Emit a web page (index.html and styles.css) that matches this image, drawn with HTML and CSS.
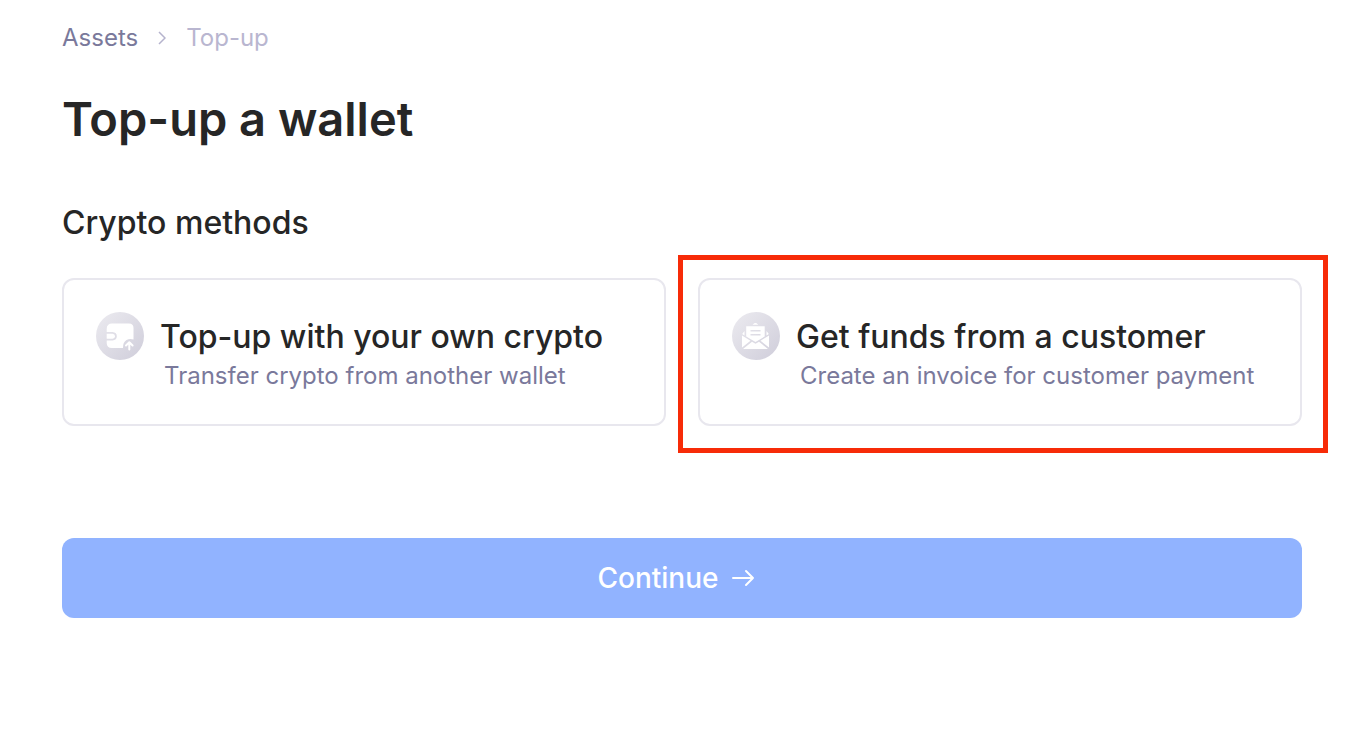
FILE: index.html
```html
<!DOCTYPE html>
<html lang="en">
<head>
<meta charset="utf-8">
<meta name="viewport" content="width=device-width, initial-scale=1">
<title>Top-up a wallet</title>
<link rel="stylesheet" href="styles.css">
</head>
<body>
<main class="page">
  <nav class="breadcrumb" aria-label="Breadcrumb">
    <a class="crumb" href="#">Assets</a>
    <svg class="crumb-arrow" viewBox="0 0 8 14" aria-hidden="true"><path d="M1 1 7 7 1 13"/></svg>
    <span class="crumb-current" aria-current="page">Top-up</span>
  </nav>
  <h1 class="title">Top-up a wallet</h1>
  <h2 class="subtitle">Crypto methods</h2>
  <div class="methods">
    <div class="method-slot">
      <button class="method" type="button">
        <svg class="method-icon" viewBox="0 0 48 48" aria-hidden="true">
          <defs><linearGradient id="disc" x1="0" y1="0" x2="1" y2="1"><stop offset="0" stop-color="#ecebf0"/><stop offset="1" stop-color="#cfcdda"/></linearGradient></defs>
          <circle cx="24" cy="24" r="24" fill="url(#disc)"/>
          <path fill="#fff" d="M16 11.500H33Q37.500 11.500 37.500 16V27.600Q34 26.300 30.500 28Q26.700 30.500 27 36H16Q10.700 36 10.700 31V28.500H16.500Q20.800 28 20.800 24.300Q20.800 20.300 16.500 20H10.700V17Q10.700 11.500 16 11.500Z"/>
          <path fill="#fff" d="M10.700 21.800H16.500Q19 22 19 24.300Q19 26.600 16.500 26.800H10.700Z"/>
          <path fill="none" stroke="#fff" stroke-width="2" stroke-linecap="round" stroke-linejoin="round" d="M33.300 37.500V31M30 33.500 33.300 30.300 36.600 33.500"/>
        </svg>
        <span class="method-text">
          <span class="method-name">Top-up with your own crypto</span>
          <span class="method-note">Transfer crypto from another wallet</span>
        </span>
      </button>
    </div>
    <div class="method-slot highlighted">
      <button class="method" type="button">
        <svg class="method-icon" viewBox="0 0 48 48" aria-hidden="true">
          <circle cx="24" cy="24" r="24" fill="url(#disc)"/>
          <path fill="#fff" d="M20.500 12.700 22.200 11.300Q23.400 10.500 24.600 11.300L26.300 12.700Z"/>
          <path fill="#fff" fill-rule="evenodd" d="M14.200 14.300H32.700V24.500L23.500 30 14.200 24.500ZM18.500 18V19.500H28.500V18ZM18.500 22V23.500H28.500V22Z"/>
          <path fill="#fff" d="M12.500 19V23.500L10.200 22ZM34.500 19V23.500L36.800 22Z"/>
          <path fill="#fff" d="M10 23.500 18.500 28.800 10 35.500ZM37 23.500 28.500 28.800 37 35.500ZM20 29.700 23.500 31.700 27 29.700 36 37H11Z"/>
        </svg>
        <span class="method-text">
          <span class="method-name">Get funds from a customer</span>
          <span class="method-note">Create an invoice for customer payment</span>
        </span>
      </button>
    </div>
  </div>
  <button class="continue" type="button">
    Continue
    <svg class="continue-arrow" viewBox="0 0 24 20" aria-hidden="true"><path d="M2 10H22M15 3 22 10 15 17"/></svg>
  </button>
</main>
</body>
</html>
```
FILE: styles.css
```css
* {
  box-sizing: border-box;
}

body {
  margin: 0;
  background: #fff;
  color: #262626;
  font-family: Inter, "Liberation Sans", sans-serif;
}

.page {
  padding: 20px 70px 40px 62px;
}

.breadcrumb {
  display: flex;
  align-items: center;
  gap: 20px;
  font-size: 24px;
  line-height: 36px;
}

.crumb {
  color: #7a799b;
  text-decoration: none;
}

.crumb-arrow {
  width: 8px;
  height: 14px;
  fill: none;
  stroke: #b5b3cd;
  stroke-width: 1.5;
}

.crumb-current {
  color: #b9b6d0;
}

.title {
  margin: 32px 0 0;
  font-size: 47px;
  font-weight: 600;
  line-height: 62px;
}

.subtitle {
  margin: 50px 0 0;
  font-size: 32px;
  font-weight: 500;
  line-height: 46px;
}

.methods {
  display: grid;
  grid-template-columns: 1fr 1fr;
  gap: 32px;
  margin-top: 32px;
}

.method-slot {
  position: relative;
}

.highlighted::after {
  content: "";
  position: absolute;
  inset: -23px -26px -27px -20px;
  border: 5px solid #f72b08;
  pointer-events: none;
}

.method {
  display: flex;
  align-items: flex-start;
  gap: 16px;
  width: 100%;
  min-height: 148px;
  padding: 32px;
  border: 2px solid #e8e7ee;
  border-radius: 12px;
  background: #fff;
  color: inherit;
  font: inherit;
  text-align: left;
  cursor: pointer;
}

.method-icon {
  flex: none;
  width: 48px;
  height: 48px;
}

.method-text {
  display: flex;
  flex-direction: column;
  white-space: nowrap;
}

.method-name {
  font-size: 32px;
  font-weight: 500;
  line-height: 50px;
}

.method-note {
  padding-left: 4px;
  color: #7a799b;
  font-size: 24px;
  line-height: 28px;
}

.continue {
  display: flex;
  align-items: center;
  justify-content: center;
  gap: 12px;
  width: 100%;
  min-height: 80px;
  margin-top: 112px;
  padding: 0 12px 0 0;
  border: 0;
  border-radius: 12px;
  background: #91b3ff;
  color: #fff;
  font: inherit;
  font-size: 28px;
  font-weight: 500;
  cursor: pointer;
}

.continue-arrow {
  width: 24px;
  height: 20px;
  fill: none;
  stroke: currentColor;
  stroke-width: 2;
  stroke-linecap: round;
  stroke-linejoin: round;
}
```
